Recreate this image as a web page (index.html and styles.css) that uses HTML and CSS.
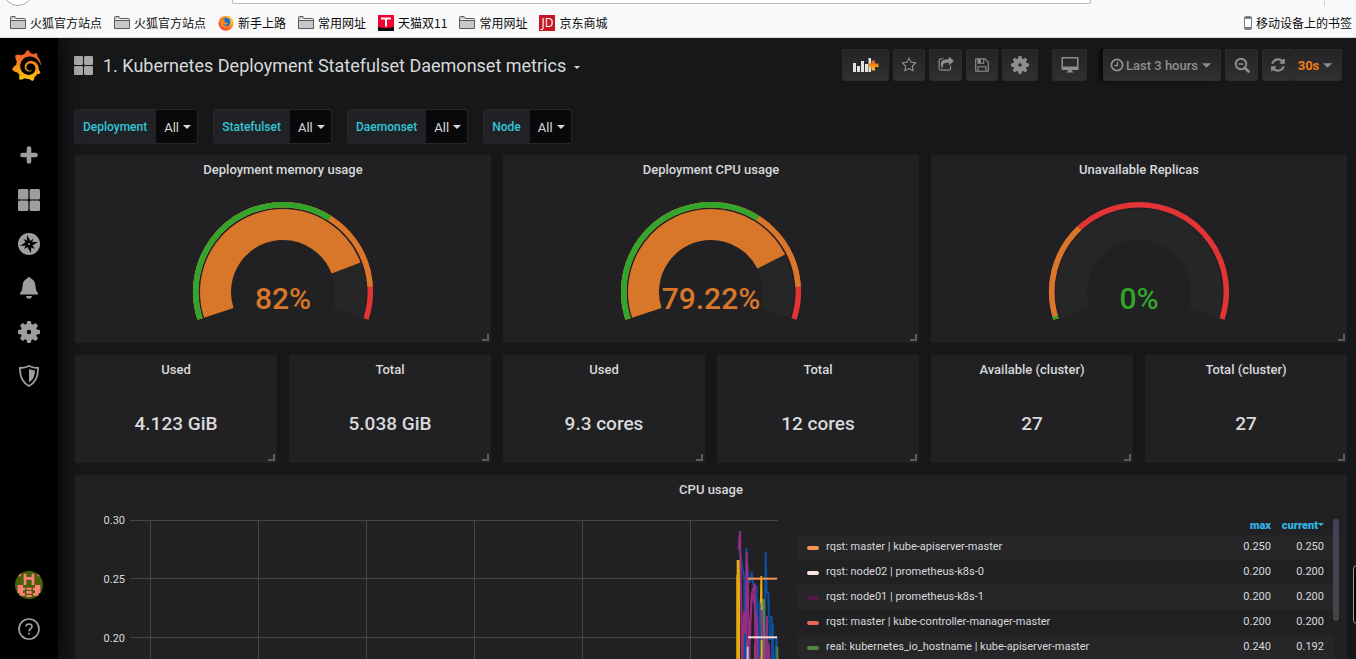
FILE: index.html
```html
<!DOCTYPE html>
<html lang="en">
<head>
<meta charset="utf-8">
<title>Kubernetes Deployment Statefulset Daemonset metrics - Grafana</title>
<link rel="stylesheet" href="styles.css">
</head>
<body>
<svg class="sprite" aria-hidden="true">
  <defs>
    <linearGradient id="flame" x1="0" y1="0" x2="0" y2="1"><stop offset="0.1" stop-color="#f05a28"/><stop offset="1" stop-color="#fbca0a"/></linearGradient>
    <linearGradient id="fox" x1="1" y1="0" x2="0" y2="1"><stop offset="0.1" stop-color="#ffd83a"/><stop offset="0.5" stop-color="#ff7a1c"/><stop offset="1" stop-color="#f0204a"/></linearGradient>
    <symbol id="folder" viewBox="0 0 16 16"><path d="M.5 13.5V2.5Q.5 1.5 1.5 1.5H5L6.5 3.5H14.5Q15.5 3.5 15.5 4.500V13.500Z" fill="#c8c8c8" stroke="#5a5a5a"/><path d="M1 5.500H15" stroke="#5a5a5a"/><path d="M1 4.500H15" stroke="#eee"/></symbol>
    <symbol id="apps" viewBox="0 0 22 22"><rect width="10.400" height="10.400" rx="1.500"/><rect x="11.600" width="10.400" height="10.400" rx="1.500"/><rect y="11.600" width="10.400" height="10.400" rx="1.500"/><rect x="11.600" y="11.600" width="10.400" height="10.400" rx="1.500"/></symbol>
    <symbol id="gear" viewBox="-11 -11 22 22">
      <circle r="5.200" fill="none" stroke="currentColor" stroke-width="6"/>
      <g id="teeth"><path d="M-2.600-7L-1.900-10.800Q0-11.200 1.900-10.800L2.600-7ZM-2.600 7L-1.900 10.800Q0 11.200 1.900 10.800L2.600 7Z"/><path d="M-7-2.600L-10.800-1.900Q-11.200 0-10.800 1.900L-7 2.600ZM7-2.600L10.800-1.900Q11.200 0 10.800 1.900L7 2.600Z"/></g>
      <use href="#teeth" transform="rotate(45)"/>
    </symbol>
    <symbol id="caret" viewBox="0 0 8 4"><path d="M0 0H8L4 4Z"/></symbol>
  </defs>
</svg>

<header class="browser">
  <span class="back-ring"></span>
  <span class="url-field"></span>
  <span class="bar-divider"></span>
  <nav class="bookmarks" aria-label="Bookmarks">
    <a href="#"><svg class="fav"><use href="#folder"/></svg>火狐官方站点</a>
    <a href="#"><svg class="fav"><use href="#folder"/></svg>火狐官方站点</a>
    <a href="#"><svg class="fav" viewBox="0 0 16 16"><circle cx="8" cy="8.300" r="7.500" fill="url(#fox)"/><circle cx="8.300" cy="7" r="4.300" fill="#1c6fd8"/><path d="M2 3Q4 5 7 4.500Q5.500 6.500 7 7.500Q10 7.500 10 8.500Q8 10.800 5 9Q7 12.500 11 11Q7 14.500 3 11Z" fill="#ff8a1c"/><path d="M8 1Q12 3 12.500 6Q13 9 11 11Q15 9 14.500 5Q12 1 8 1Z" fill="#ffc52e"/></svg>新手上路</a>
    <a href="#"><svg class="fav"><use href="#folder"/></svg>常用网址</a>
    <a href="#"><svg class="fav" viewBox="0 0 16 16"><path d="M0 0H16V16H0Z" fill="#f5002f"/><path d="M0 12Q8 14 16 12V16H0Z"/><path d="M3 2.500H13V4.500H9V11.500H7V4.500H3Z" fill="#fff"/></svg>天猫双11</a>
    <a href="#"><svg class="fav"><use href="#folder"/></svg>常用网址</a>
    <a href="#"><span class="fav jd" aria-hidden="true">JD</span>京东商城</a>
    <a href="#" class="mobile"><svg class="phone" viewBox="0 0 8 14"><rect x=".5" y=".5" width="7" height="13" rx="1" fill="#fff" stroke="#75808c"/><path d="M0 1H8V3H0ZM0 11H8V13H0Z" fill="#75808c"/></svg>移动设备上的书签</a>
  </nav>
</header>

<div class="app">
  <nav class="side" aria-label="Main menu">
    <a href="#" class="logo" aria-label="Home"><svg viewBox="0 0 24 24"><path fill="url(#flame)" d="M23.02 10.59a8.578 8.578 0 0 0-.862-3.034 8.911 8.911 0 0 0-1.789-2.445c.337-1.342-.413-2.505-.413-2.505-1.292-.08-2.113.4-2.416.62-.052-.02-.102-.044-.154-.064-.22-.089-.446-.172-.677-.247-.231-.073-.47-.14-.711-.197a9.867 9.867 0 0 0-.875-.161C14.557.753 12.94 0 12.94 0c-1.804 1.145-2.147 2.744-2.147 2.744l-.018.093c-.098.029-.2.057-.298.088-.138.042-.275.094-.413.143-.138.055-.275.107-.41.166a8.869 8.869 0 0 0-1.557.87l-.063-.029c-2.497-.955-4.716.195-4.716.195-.203 2.658.996 4.33 1.235 4.636a11.608 11.608 0 0 0-.607 2.635C1.636 12.677.953 15.014.953 15.014c1.926 2.214 4.171 2.351 4.171 2.351.003-.002.006-.002.006-.005.285.509.615.994.986 1.446.156.19.32.371.488.548-.704 2.009.099 3.68.099 3.68 2.144.08 3.553-.937 3.849-1.173a9.784 9.784 0 0 0 3.164.501h.08l.055-.003.107-.002.103-.005.003.002c1.01 1.44 2.788 1.646 2.788 1.646 1.264-1.332 1.337-2.653 1.337-2.94v-.058c0-.02-.003-.039-.003-.06.265-.187.52-.387.758-.6a7.875 7.875 0 0 0 1.415-1.7c1.43.083 2.437-.885 2.437-.885-.236-1.49-1.085-2.216-1.264-2.354l-.018-.013-.016-.013a.217.217 0 0 1-.031-.02c.008-.092.016-.18.02-.27.011-.162.016-.323.016-.48v-.253l-.005-.098-.008-.135a1.891 1.891 0 0 0-.01-.13c-.003-.042-.008-.083-.013-.125l-.016-.124-.018-.122a6.215 6.215 0 0 0-2.032-3.73 6.015 6.015 0 0 0-3.222-1.46 6.292 6.292 0 0 0-.85-.048l-.107.002h-.063l-.044.003-.104.008a4.777 4.777 0 0 0-3.335 1.695c-.332.4-.592.84-.768 1.297a4.594 4.594 0 0 0-.312 1.817l.003.091c.005.055.007.11.013.164a3.615 3.615 0 0 0 .698 1.82 3.53 3.53 0 0 0 1.827 1.282c.33.098.66.14.971.137.039 0 .078 0 .114-.002l.063-.003c.02 0 .041-.003.062-.003.034-.002.065-.007.099-.01.007 0 .018-.003.028-.003l.031-.005.06-.008a1.18 1.18 0 0 0 .112-.02c.036-.008.072-.013.109-.024a2.634 2.634 0 0 0 .914-.415c.028-.02.056-.041.085-.065a.248.248 0 0 0 .039-.35.244.244 0 0 0-.309-.06l-.078.042c-.09.044-.184.083-.283.116a2.476 2.476 0 0 1-.475.096c-.028.003-.054.006-.083.006l-.083.002c-.026 0-.054 0-.08-.002l-.102-.006h-.012l-.024.006c-.016-.003-.031-.003-.044-.006-.031-.002-.06-.007-.091-.01a2.59 2.59 0 0 1-.724-.213 2.557 2.557 0 0 1-.667-.438 2.52 2.52 0 0 1-.805-1.475 2.306 2.306 0 0 1-.029-.444l.006-.122v-.023l.002-.031c.003-.021.003-.04.005-.06a3.163 3.163 0 0 1 1.352-2.29 3.12 3.12 0 0 1 .937-.43 2.946 2.946 0 0 1 .776-.101h.06l.07.002.045.003h.026l.07.005a4.041 4.041 0 0 1 1.635.49 3.94 3.94 0 0 1 1.602 1.662 3.77 3.77 0 0 1 .397 1.414l.005.076.003.075c.002.026.002.05.002.075 0 .024.003.052 0 .07v.065l-.002.073-.008.174a6.195 6.195 0 0 1-.08.639 5.1 5.1 0 0 1-.267.927 5.31 5.31 0 0 1-.624 1.13 5.052 5.052 0 0 1-3.237 2.014 4.82 4.82 0 0 1-.649.066l-.039.003h-.287a6.607 6.607 0 0 1-1.716-.265 6.776 6.776 0 0 1-3.4-2.274 6.75 6.75 0 0 1-.746-1.15 6.616 6.616 0 0 1-.714-2.596l-.005-.083-.002-.02v-.056l-.003-.073v-.096l-.003-.104v-.07l.003-.163c.008-.22.026-.45.054-.678a8.707 8.707 0 0 1 .28-1.355c.128-.444.286-.872.473-1.277a7.04 7.04 0 0 1 1.456-2.1 5.925 5.925 0 0 1 .953-.763c.169-.111.343-.213.524-.306.089-.05.182-.091.273-.135.047-.02.093-.042.138-.062a7.177 7.177 0 0 1 .714-.267l.145-.045c.049-.015.098-.026.148-.041.098-.029.197-.052.296-.076.049-.013.1-.02.15-.033l.15-.032.151-.028.076-.013.075-.01.153-.024c.057-.01.114-.013.171-.023l.169-.021c.036-.003.073-.008.106-.01l.073-.008.036-.003.042-.002c.057-.003.114-.008.171-.01l.086-.006h.023l.037-.003.145-.007a7.999 7.999 0 0 1 1.708.125 7.917 7.917 0 0 1 2.048.68 8.253 8.253 0 0 1 1.672 1.09l.09.077.089.078c.06.052.114.107.171.159.057.052.112.106.166.16.052.055.107.107.159.164a8.671 8.671 0 0 1 1.41 1.978c.012.026.028.052.04.078l.04.078.075.156c.023.051.05.1.07.153l.065.15a8.848 8.848 0 0 1 .45 1.34.19.19 0 0 0 .201.142.186.186 0 0 0 .172-.184c.01-.246.002-.532-.024-.856z"/></svg></a>
    <a href="#" aria-label="Create"><svg viewBox="0 0 22 22"><path d="M11 3.500V16.500M4.500 10H17.500" stroke="currentColor" stroke-width="4.600" stroke-linecap="round"/></svg></a>
    <a href="#" aria-label="Dashboards"><svg><use href="#apps"/></svg></a>
    <a href="#" aria-label="Explore"><svg viewBox="0 0 22 22"><circle cx="11" cy="11" r="11"/><path d="M9 2L12.500 8L15.500 5.500L14.200 9L20 9L14.500 12.500L17 16L13.200 14.400L13 20L9.300 14L6 16L7.600 12.500L2 13L7.500 9.300L5.500 6L8.800 7.500Z" fill="#000"/><circle cx="11" cy="11" r="1"/></svg></a>
    <a href="#" aria-label="Alerting"><svg viewBox="0 0 22 22"><path d="M11 0Q12.500 0 12.800 1.500Q17.500 3.500 17.500 9Q17.500 14 20 16V17.500H2V16Q4.500 14 4.500 9Q4.500 3.500 9.200 1.500Q9.500 0 11 0ZM8 19H14Q13.500 21.800 11 21.800T8 19Z"/></svg></a>
    <a href="#" aria-label="Configuration"><svg><use href="#gear"/></svg></a>
    <a href="#" aria-label="Server admin"><svg viewBox="0 0 22 22"><path d="M11 1Q15 3 20 3Q20.500 16 11 21Q1.500 16 2 3Q7 3 11 1Z" fill="none" stroke="currentColor" stroke-width="1.800"/><path d="M11 4Q14 5.300 17 5.500Q17 13.500 11 17.500Z"/></svg></a>
    <span class="spring"></span>
    <a href="#" aria-label="Profile"><svg class="avatar" viewBox="0 0 84 84"><rect width="84" height="84" fill="#466108"/><path d="M26 8H34V18H50V8H58V42H50V26H34V42H26ZM8 0H18V16H8ZM68 0H76V16H68ZM8 42H24V50H30V58H24V66H30V74H14V66H8ZM76 42H60V50H54V58H60V66H54V74H70V66H76ZM34 50H50V56H34ZM34 60H50V68H34ZM34 72H50V78H34Z" fill="#ff8078"/></svg></a>
    <a href="#" aria-label="Help"><svg class="outline" viewBox="0 0 22 22" stroke-width="1.700"><circle cx="11" cy="11" r="10"/><path d="M8 8.500Q8.200 6 11 6Q14 6 14 8.600Q14 10 12.300 11Q11 11.800 11 13.200M11 14.800V16.500"/></svg></a>
  </nav>

  <main class="main">
    <div class="toolbar">
      <button class="title"><svg class="title-icon"><use href="#apps"/></svg>1. Kubernetes Deployment Statefulset Daemonset metrics<svg class="caret small"><use href="#caret"/></svg></button>
      <div class="tools">
        <button class="tool w47" aria-label="Add panel"><svg class="add" viewBox="0 0 26 16"><path d="M0 6H3V15H0ZM4 9H7V15H4ZM8 4H11V15H8ZM12 7H15V15H12ZM15.500 1H18V15H15.500Z" fill="#e3e3e3"/><path d="M18.500 3.500H22V6.500H25.500V10H22V13.500H18.500V10H15.500V6.500H18.500Z" fill="url(#flame)"/></svg></button>
        <button class="tool" aria-label="Star"><svg viewBox="0 0 1792 1792"><path d="M1201 1004l306-297-422-62-189-382-189 382-422 62 306 297-73 421 378-199 377 199zm527-357q0 22-26 48l-363 354 86 500q1 7 1 20 0 50-41 50-19 0-40-12l-449-236-449 236q-22 12-40 12-21 0-31.500-14.500t-10.500-35.500q0-6 2-20l86-500-364-354q-25-27-25-48 0-37 56-46l502-73 225-455q19-41 49-41t49 41l225 455 502 73q56 9 56 46z"/></svg></button>
        <button class="tool w33" aria-label="Share"><svg viewBox="0 0 1792 1792"><path d="M1472 989v259q0 119-84.500 203.500t-203.500 84.500h-832q-119 0-203.500-84.500t-84.500-203.500v-832q0-119 84.500-203.500t203.500-84.500h255q13 0 22.500 9.500t9.500 22.500q0 27-26 32-77 26-133 60-10 4-16 4h-112q-66 0-113 47t-47 113v832q0 66 47 113t113 47h832q66 0 113-47t47-113v-214q0-19 18-29 28-13 54-37 16-16 35-8 21 9 21 29zm237-496l-384 384q-18 19-45 19-12 0-25-5-39-17-39-59v-192h-160q-323 0-438 131-119 137-74 473 3 23-20 34-8 2-12 2-16 0-26-13-10-14-21-31t-39.500-68.500-49.500-99.500-38.500-114-17.500-122q0-49 3.500-91t14-90 28-88 47-81.500 68.500-74 94.500-61.500 124.500-48.500 159.500-30.500 196.500-11h160v-192q0-42 39-59 13-5 25-5 26 0 45 19l384 384q19 19 19 45t-19 45z"/></svg></button>
        <button class="tool" aria-label="Save"><svg viewBox="0 0 1792 1792"><path d="M512 1536h768v-384h-768v384zm896 0h128v-896q0-14-10-38.500t-20-34.500l-281-281q-10-10-34-20t-39-10v416q0 40-28 68t-68 28h-576q-40 0-68-28t-28-68v-416h-128v1280h128v-416q0-40 28-68t68-28h832q40 0 68 28t28 68v416zm-384-928v-320q0-13-9.500-22.500t-22.500-9.500h-192q-13 0-22.500 9.500t-9.500 22.500v320q0 13 9.500 22.500t22.500 9.500h192q13 0 22.500-9.500t9.500-22.500zm640 32v928q0 40-28 68t-68 28h-1344q-40 0-68-28t-28-68v-1344q0-40 28-68t68-28h928q40 0 88 20t76 48l280 280q28 28 48 76t20 88z"/></svg></button>
        <button class="tool w36" aria-label="Settings"><svg class="cog"><use href="#gear"/></svg></button>
        <button class="tool w35 apart" aria-label="Cycle view mode"><svg class="cog" viewBox="0 0 18 18"><path d="M1.500 1H16.500Q17.500 1 17.500 2V13Q17.500 14 16.500 14H1.500Q.5 14 .5 13V2Q.5 1 1.500 1ZM2 2.500V10.500H16V2.500ZM7 14H11V15.500H12.500V16.500H5.500V15.500H7Z" fill-rule="evenodd"/></svg></button>
        <button class="tool range apart"><svg class="clock outline" viewBox="0 0 14 14" stroke-width="1.800"><circle cx="7" cy="7" r="5.600"/><path d="M7.500 3.500V7.500H4.500" stroke-width="1.300"/></svg>Last 3 hours<svg class="caret"><use href="#caret"/></svg></button>
        <button class="tool w33" aria-label="Zoom out"><svg class="outline" viewBox="0 0 16 16"><circle cx="7" cy="7" r="5.300" stroke-width="2"/><path d="M4.500 7H9.500" stroke-width="1.500"/><path d="M11 11L14.500 14.500" stroke-width="2.800" stroke-linecap="round"/></svg></button>
        <div class="refresh">
          <button class="tool" aria-label="Refresh"><svg viewBox="0 0 1792 1792"><path d="M1639 1056q0 5-1 7-64 268-268 434.500t-478 166.500q-146 0-282.500-55t-243.500-157l-129 129q-19 19-45 19t-45-19-19-45v-448q0-26 19-45t45-19h448q26 0 45 19t19 45-19 45l-137 137q71 66 161 102t187 36q134 0 250-65t186-179q11-17 53-117 8-23 30-23h192q13 0 22.500 9.500t9.500 22.500zm25-800v448q0 26-19 45t-45 19h-448q-26 0-45-19t-19-45 19-45l138-138q-148-137-349-137-134 0-250 65t-186 179q-11 17-53 117-8 23-30 23h-199q-13 0-22.500-9.500t-9.500-22.500v-7q65-268 270-434.500t480-166.500q146 0 284 55.500t245 156.500l130-129q19-19 45-19t45 19 19 45z"/></svg></button>
          <button class="tool interval">30s<svg class="caret"><use href="#caret"/></svg></button>
        </div>
      </div>
    </div>

    <form class="variables">
      <div class="variable"><label for="v1">Deployment</label><span class="pick"><select id="v1"><option>All</option></select><svg class="caret"><use href="#caret"/></svg></span></div>
      <div class="variable"><label for="v2">Statefulset</label><span class="pick"><select id="v2"><option>All</option></select><svg class="caret"><use href="#caret"/></svg></span></div>
      <div class="variable"><label for="v3">Daemonset</label><span class="pick"><select id="v3"><option>All</option></select><svg class="caret"><use href="#caret"/></svg></span></div>
      <div class="variable"><label for="v4">Node</label><span class="pick"><select id="v4"><option>All</option></select><svg class="caret"><use href="#caret"/></svg></span></div>
    </form>

    <div class="grid">
      <section class="panel wide">
        <h2>Deployment memory usage</h2>
        <svg class="gauge" viewBox="-100 -107 200 158">
          <path class="dial" d="M-64.200 20.900A67.500 67.500 0 1 1 64.200 20.900"/>
          <path class="dial orange" pathLength="100" stroke-dasharray="82 100" d="M-64.200 20.900A67.500 67.500 0 1 1 64.200 20.900"/>
          <path class="ring red" d="M-83 27A87.300 87.300 0 1 1 83 27"/>
          <path class="ring orange" pathLength="100" stroke-dasharray="90 100" d="M-83 27A87.300 87.300 0 1 1 83 27"/>
          <path class="ring green" pathLength="100" stroke-dasharray="65 100" d="M-83 27A87.300 87.300 0 1 1 83 27"/>
          <text class="reading warm" y="17">82%</text>
        </svg>
      </section>
      <section class="panel wide">
        <h2>Deployment CPU usage</h2>
        <svg class="gauge" viewBox="-100 -107 200 158">
          <path class="dial" d="M-64.200 20.900A67.500 67.500 0 1 1 64.200 20.900"/>
          <path class="dial orange" pathLength="100" stroke-dasharray="79.22 100" d="M-64.200 20.900A67.500 67.500 0 1 1 64.200 20.900"/>
          <path class="ring red" d="M-83 27A87.300 87.300 0 1 1 83 27"/>
          <path class="ring orange" pathLength="100" stroke-dasharray="90 100" d="M-83 27A87.300 87.300 0 1 1 83 27"/>
          <path class="ring green" pathLength="100" stroke-dasharray="65 100" d="M-83 27A87.300 87.300 0 1 1 83 27"/>
          <text class="reading warm" y="17">79.22%</text>
        </svg>
      </section>
      <section class="panel wide">
        <h2>Unavailable Replicas</h2>
        <svg class="gauge" viewBox="-100 -107 200 158">
          <path class="dial" d="M-64.200 20.900A67.500 67.500 0 1 1 64.200 20.900"/>
          <path class="ring red" d="M-83 27A87.300 87.300 0 1 1 83 27"/>
          <path class="ring orange" pathLength="100" stroke-dasharray="30 100" d="M-83 27A87.300 87.300 0 1 1 83 27"/>
          <path class="ring green" pathLength="100" stroke-dasharray="1 100" d="M-83 27A87.300 87.300 0 1 1 83 27"/>
          <text class="reading good" y="17">0%</text>
        </svg>
      </section>

      <section class="panel"><h2>Used</h2><p class="stat">4.123 GiB</p></section>
      <section class="panel"><h2>Total</h2><p class="stat">5.038 GiB</p></section>
      <section class="panel"><h2>Used</h2><p class="stat">9.3 cores</p></section>
      <section class="panel"><h2>Total</h2><p class="stat">12 cores</p></section>
      <section class="panel"><h2>Available (cluster)</h2><p class="stat">27</p></section>
      <section class="panel"><h2>Total (cluster)</h2><p class="stat">27</p></section>

      <section class="panel full">
        <h2>CPU usage</h2>
        <div class="graph">
          <svg class="chart" viewBox="0 0 700 250">
            <path class="lines" d="M45 15.500H693M45 73.500H693M45 132.500H693M45 191.500H693M65.500 15V250M173.500 15V250M281.500 15V250M389.500 15V250M497.500 15V250M605.500 15V250"/>
            <text class="tick" x="40" y="19">0.30</text>
            <text class="tick" x="40" y="78">0.25</text>
            <text class="tick" x="40" y="137">0.20</text>
            <g class="series" transform="translate(575 -35) scale(.3333)">
              <path stroke="#0a50a1" d="M238 237L245 280L253 325V600M256 600L259 236L265 335H270L275 308L280 345L290 350L294 600M297 600L299 400L304 385L310 420L313 600L317 248L320 367L325 370L327 440L335 442L337 600M343 600L350 500L352 600"/>
              <path stroke="#508642" d="M262 600V510M285 600V523M306 390H312V480L315 600M352 530V600"/>
              <path stroke="#e5ac0e" stroke-width="10" d="M235 270V600"/>
              <path stroke="#e5ac0e" d="M232 315V600M300 600L304 320L307 600"/>
              <path stroke="#962d82" d="M236 237L240 185L242 300L247 600L252 427L257 600L260 248L264 350L266 600L275 372L284 343L287 600M278 370L291 450L293 600M305 420L309 600M296 600L302 520M315 600L321 440L323 600M326 520L330 600M244 430L246 600M269 450V600"/>
              <path stroke="#0a50a1" d="M255 492V600M299 400L301 600M328 445L330 510M339 460V600"/>
              <path stroke="#aecbd8" d="M263 530V600"/>
              <path stroke="#e5ac0e" d="M305 510V600"/>
              <path stroke="#f9934e" d="M264 326H351"/>
              <path stroke="#fbd9d4" d="M264 502H351"/>
            </g>
          </svg>
          <table class="legend">
            <thead><tr><th></th><th class="num">max</th><th class="num">current<svg class="caret small"><use href="#caret"/></svg></th></tr></thead>
            <tbody>
              <tr><td><i class="key k1"></i>rqst: master | kube-apiserver-master</td><td class="num">0.250</td><td class="num">0.250</td></tr>
              <tr><td><i class="key k2"></i>rqst: node02 | prometheus-k8s-0</td><td class="num">0.200</td><td class="num">0.200</td></tr>
              <tr><td><i class="key k3"></i>rqst: node01 | prometheus-k8s-1</td><td class="num">0.200</td><td class="num">0.200</td></tr>
              <tr><td><i class="key k4"></i>rqst: master | kube-controller-manager-master</td><td class="num">0.200</td><td class="num">0.200</td></tr>
              <tr><td><i class="key k5"></i>real: kubernetes_io_hostname | kube-apiserver-master</td><td class="num">0.240</td><td class="num">0.192</td></tr>
            </tbody>
          </table>
          <span class="scrollbar"></span>
        </div>
      </section>
    </div>
  </main>
</div>
<span class="edge-tab"></span>
</body>
</html>
```
FILE: styles.css
```css
* { box-sizing: border-box; }

body {
  margin: 0;
  height: 100vh;
  display: flex;
  flex-direction: column;
  overflow: hidden;
  background: #161719;
  color: #d8d9da;
  font: 13px Roboto, "Noto Sans CJK SC", sans-serif;
}

a { color: inherit; text-decoration: none; }
button { margin: 0; border: 0; background: none; color: inherit; font: inherit; }
svg { display: block; fill: currentColor; flex: none; }
.outline { fill: none; stroke: currentColor; }
.sprite { position: absolute; width: 0; height: 0; }

/* Browser bar */
.browser {
  position: relative;
  flex: none;
  padding: 9px 0 1px;
  overflow: hidden;
  background: #f9f9fa;
  border-bottom: 1px solid #d9d9da;
  color: #0c0c0d;
}
.back-ring {
  position: absolute;
  left: 3px;
  top: -24px;
  width: 30px;
  height: 30px;
  border: 1px solid #a8a8a8;
  border-radius: 50%;
  background: #fff;
}
.url-field {
  position: absolute;
  left: 232px;
  right: 265px;
  top: -20px;
  height: 24px;
  border: 1px solid #b8b8b8;
  border-radius: 2px;
  background: #fff;
}
.bar-divider { position: absolute; right: 31px; top: 0; width: 1px; height: 6px; background: #d4d4d6; }
.bookmarks {
  display: flex;
  gap: 12px;
  padding: 0 4px 0 10px;
  font: 12px/27px "Noto Sans CJK SC", sans-serif;
}
.bookmarks a { display: flex; align-items: center; gap: 4px; white-space: nowrap; }
.fav { width: 16px; height: 16px; }
.jd { background: #c81623; color: #fff; font: 12px/16px "Open Sans", sans-serif; text-align: center; }
.bookmarks .mobile { margin-left: auto; }
.phone { width: 8px; height: 14px; }

/* Application shell */
.app { flex: 1; min-height: 0; display: flex; }
.side {
  position: relative;
  flex: 0 0 58px;
  display: flex;
  flex-direction: column;
  padding-bottom: 8px;
  background: #000;
  box-shadow: 0 0 20px #000;
  clip-path: inset(0 -30px 0 0);
  color: #9e9e9e;
}
.side a { height: 44px; display: flex; align-items: center; justify-content: center; }
.side svg { width: 22px; height: 22px; }
.side .logo { height: 54px; margin-bottom: 42px; padding-right: 5px; }
.side .logo svg { width: 31px; height: 31px; }
.side .avatar { width: 28px; height: 28px; border-radius: 50%; }
.spring { flex: 1; }

.main { flex: 1; min-width: 0; padding: 11px 9px 0 16px; overflow: hidden; }

/* Toolbar */
.toolbar { display: flex; justify-content: space-between; height: 60px; padding-right: 5px; }
.title { display: flex; align-items: center; height: 32px; padding: 0; font-size: 18px; white-space: nowrap; }
.title-icon { width: 19px; height: 19px; margin-right: 10px; color: #a8a8a8; }
.caret { width: 8px; height: 4px; margin-left: 5px; }
.caret.small { width: 6px; height: 3px; margin: 4px 0 0 8px; }
.tools { display: flex; gap: 4px; height: 32px; }
.tool {
  display: flex;
  align-items: center;
  justify-content: center;
  width: 32px;
  height: 32px;
  padding: 0;
  border: 1px solid #2c2c2f;
  border-radius: 2px;
  background: linear-gradient(#242426, #303033);
  color: #8e8e8e;
  font-weight: 500;
}
.tool svg { width: 16px; height: 16px; }
.tool .add { width: 26px; }
.tool .cog { width: 18px; height: 18px; }
.tool .clock { width: 14px; height: 14px; margin-right: 2px; }
.tool .caret { width: 9px; height: 5px; margin-left: 4px; }
.w33 { width: 33px; }
.w35 { width: 35px; }
.w36 { width: 36px; }
.w47 { width: 47px; }
.apart { margin-left: 10px; }
.range { width: 118px; margin-left: 12px; padding-right: 3px; box-shadow: -4px 0 2px #0c0c0d; }
.refresh { display: flex; }
.refresh .interval { width: 48px; padding-right: 5px; border-left: 0; color: #eb7b18; font-weight: 700; }
.interval .caret { color: #8e8e8e; }

/* Template variables */
.variables { display: flex; gap: 15px; margin: 0 0 11px; }
.variable { display: flex; height: 35px; border: 1px solid #262628; border-radius: 3px; background: #202226; overflow: hidden; }
.variable label { padding: 1px 9px 0 8px; color: #33c5d8; font-size: 12px; font-weight: 500; line-height: 33px; }
.pick { display: grid; width: 41px; align-items: center; background: #09090b; }
.pick select, .pick .caret { grid-area: 1 / 1; }
.pick select {
  width: 100%;
  height: 33px;
  padding: 2px 0 0 8px;
  border: 0;
  background: transparent;
  color: #d8d9da;
  font: 13px Roboto, sans-serif;
  appearance: none;
}
.pick .caret { margin: 0 6px 0 0; justify-self: end; pointer-events: none; }

/* Dashboard */
.grid { display: grid; grid-template-columns: repeat(6, minmax(0, 1fr)); gap: 12px; padding-left: 1px; }
.panel { position: relative; border-radius: 2px; background: #212124; }
.panel::after {
  content: "";
  position: absolute;
  right: 2px;
  bottom: 2px;
  width: 5px;
  height: 5px;
  border: solid #5c5c5e;
  border-width: 0 2px 2px 0;
}
.wide { grid-column: span 2; }
.full { grid-column: 1 / -1; }
.panel h2 { margin: 0; font-size: 13px; font-weight: 500; line-height: 30px; text-align: center; }
.gauge { height: 158px; margin: 0 auto; }
.dial { fill: none; stroke: #262626; stroke-width: 31; }
.ring { fill: none; stroke-width: 5.5; }
.orange { stroke: #d87729; }
.red { stroke: #e23434; }
.green { stroke: #32a52b; }
.reading { font-size: 30px; font-weight: 500; text-anchor: middle; }
.warm { fill: #d87729; }
.good { fill: #32a52b; }
.stat { margin: 0; font-size: 19px; font-weight: 500; line-height: 78px; text-align: center; }

/* Graph */
.graph { display: flex; align-items: flex-start; padding: 0 8px 0 10px; }
.chart { flex: 1 1 0; min-width: 0; }
.lines { fill: none; stroke: #464648; }
.tick { font-size: 11px; text-anchor: end; }
.series { fill: none; stroke-width: 6; stroke-linejoin: round; }
.legend { flex: none; width: 536px; margin: 10px 0 0 12px; border-collapse: collapse; font-size: 11px; }
.legend th { height: 20px; padding: 0; color: #33b5e5; font-weight: 900; }
.legend td { height: 25px; padding: 0 0 2px 10px; white-space: nowrap; }
.legend tbody tr:nth-child(odd) { background: #262628; }
.legend .num { width: 53px; padding-left: 0; padding-right: 9px; text-align: right; }
.legend .caret { display: inline-block; margin: 0; vertical-align: 3px; }
.key { display: inline-block; width: 12px; height: 4px; margin-right: 7px; border-radius: 2px; }
.k1 { background: #f9934e; }
.k2 { background: #fce2de; }
.k3 { background: #511749; }
.k4 { background: #ea6460; }
.k5 { background: #508642; }
.scrollbar { flex: none; width: 6px; height: 102px; margin-top: 14px; border-radius: 3px; background: linear-gradient(#404357, #454547); }
.edge-tab {
  position: absolute;
  right: -6px;
  top: 565px;
  width: 9px;
  height: 59px;
  border: 1px solid #a0a0a0;
  border-radius: 4px;
  background: #000;
}
```
